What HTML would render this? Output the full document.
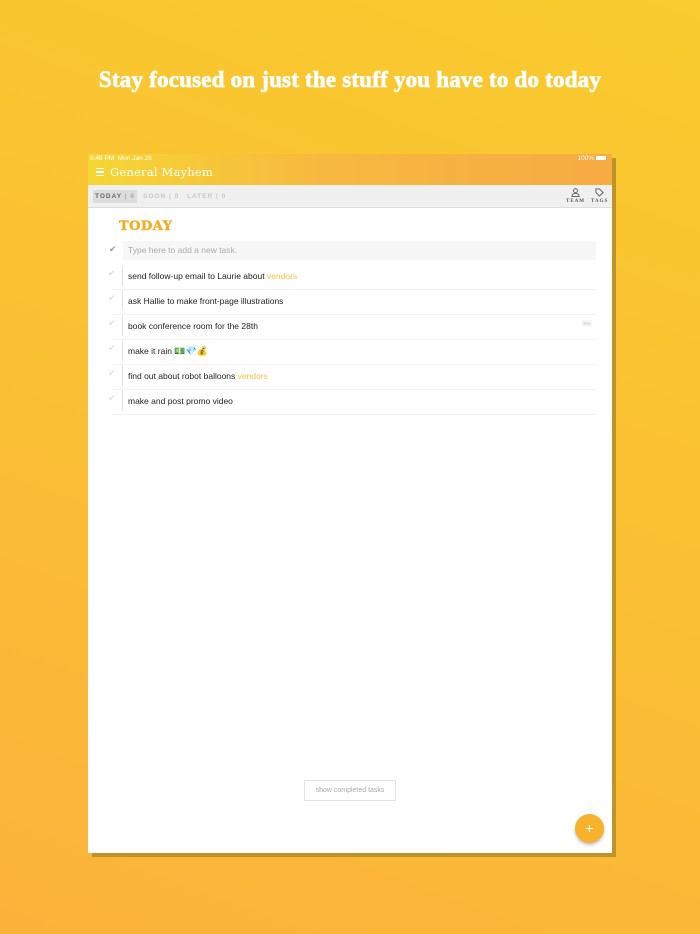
<!DOCTYPE html>
<html><head><meta charset="utf-8"><style>
*{margin:0;padding:0;box-sizing:border-box}
html,body{width:700px;height:934px;overflow:hidden}
body{background:linear-gradient(200deg,#f9cb2e 0%,#fac133 45%,#fbb23b 100%);font-family:"Liberation Sans",sans-serif;position:relative}
h1{position:absolute;top:67px;left:0;width:700px;text-align:center;color:#fff;font-family:"Liberation Serif",serif;font-weight:bold;font-size:23px;letter-spacing:0.2px;-webkit-text-stroke:0.7px #fff}
.shadow{position:absolute;left:92px;top:158px;width:524px;height:699px;background:#c0922a}
.card{position:absolute;left:88px;top:154px;width:524px;height:699px;background:#fff;overflow:hidden}
.hdr{height:31px;background:linear-gradient(90deg,#f6d634 0%,#f7b840 45%,#f6ab43 100%);color:#fff;position:relative}
.status{position:absolute;top:1px;left:2px;font-size:6.5px}
.status2{position:absolute;top:1px;right:6px;font-size:6.5px}
.title{position:absolute;top:11px;left:22px;font-family:"DejaVu Serif",serif;font-size:11.5px;letter-spacing:.2px}
.ham{position:absolute;left:8px;top:14px;width:8px}
.ham i{display:block;height:1.3px;background:#fff;margin-bottom:2px}
.tabs{height:23px;background:#f0f0f0;border-bottom:1px solid #ddd;position:relative;font-size:6.5px;letter-spacing:1px;font-weight:bold}
.tab{position:absolute;top:8px;color:#c8c8c8}
.tab.on{background:#ddd;color:#666;top:5px;left:5px;padding:3px 2px}
.ico{position:absolute;top:3px;font-size:5px;color:#555;font-family:"Liberation Serif",serif;text-align:center}
.today{position:absolute;left:31px;top:65px;color:#f5ad1c;font-family:"DejaVu Serif",serif;font-weight:bold;font-size:13px;letter-spacing:.5px;-webkit-text-stroke:0.4px #f5ad1c}
.input{position:absolute;left:35px;top:87px;width:473px;height:19px;background:#f7f7f7;font-size:8.5px;color:#aaa;padding:4px 5px}
.row{position:absolute;left:24px;width:484px;height:25px;border-bottom:1px solid #f3f3f3;font-size:8.5px;color:#222}
.row .bar{position:absolute;left:10px;top:0;width:1px;height:21px;background:#e2e2e2}
.row .t{position:absolute;left:16px;top:6px}
.ck{position:absolute;left:-4px;top:3px;color:#e0e0e0;font-size:9px}
.v{color:#f6c048}
.btn{position:absolute;left:216px;top:626px;width:92px;height:21px;border:1px solid #e3e3e3;font-size:7px;color:#aaa;text-align:center;line-height:19px}
.fab{position:absolute;left:487px;top:660px;width:29px;height:29px;border-radius:50%;background:#f6b22a;color:#fff;text-align:center;line-height:28px;font-size:14px;box-shadow:0 2px 3px rgba(0,0,0,.25)}
</style></head><body>
<h1>Stay focused on just the stuff you have to do today</h1>
<div class="shadow"></div>
<div class="card">
 <div class="hdr">
  <div class="status">6:48 PM&nbsp;&nbsp;Mon Jan 28</div>
  <div class="status2">100% <span style="display:inline-block;width:10px;height:4px;background:#fff;vertical-align:middle"></span></div>
  <div class="ham"><i></i><i></i><i></i></div>
  <div class="title">General Mayhem</div>
 </div>
 <div class="tabs">
  <div class="tab on">TODAY <span style="color:#aaa">| 6</span></div>
  <div class="tab" style="left:55px">SOON <span>| 0</span></div>
  <div class="tab" style="left:99px">LATER <span>| 0</span></div>
  <div class="ico" style="left:478px"><svg width="9" height="9" viewBox="0 0 10 10"><circle cx="5" cy="3" r="2.2" fill="none" stroke="#555"/><path d="M1 9.5Q1 6 5 6Q9 6 9 9.5Z" fill="none" stroke="#555"/></svg><br>TEAM</div>
  <div class="ico" style="left:503px"><svg width="9" height="9" viewBox="0 0 10 10"><path d="M1 1H5L9 5L5 9L1 5Z" fill="none" stroke="#555"/></svg><br>TAGS</div>
 </div>
 <div class="today">TODAY</div>
 <div class="ck" style="position:absolute;left:21px;top:90px;color:#999">✔</div>
 <div class="input">Type here to add a new task.</div>
 <div class="row" style="top:111px"><span class="ck">✔</span><div class="bar"></div><div class="t">send follow-up email to Laurie about <span class="v">vendors</span></div></div>
 <div class="row" style="top:136px"><span class="ck">✔</span><div class="bar"></div><div class="t">ask Hallie to make front-page illustrations</div></div>
 <div class="row" style="top:161px"><span class="ck">✔</span><div class="bar"></div><div class="t">book conference room for the 28th</div><span style="position:absolute;right:4px;top:5px;font-size:4px;color:#bbb;background:#f5f5f5;padding:1px 2px">FRI</span></div>
 <div class="row" style="top:186px"><span class="ck">✔</span><div class="bar"></div><div class="t">make it rain <span style="font-size:9px">💵💎💰</span></div></div>
 <div class="row" style="top:211px"><span class="ck">✔</span><div class="bar"></div><div class="t">find out about robot balloons <span class="v">vendors</span></div></div>
 <div class="row" style="top:236px"><span class="ck">✔</span><div class="bar"></div><div class="t">make and post promo video</div></div>
 <div class="btn">show completed tasks</div>
 <div class="fab">+</div>
</div>
</body></html>
